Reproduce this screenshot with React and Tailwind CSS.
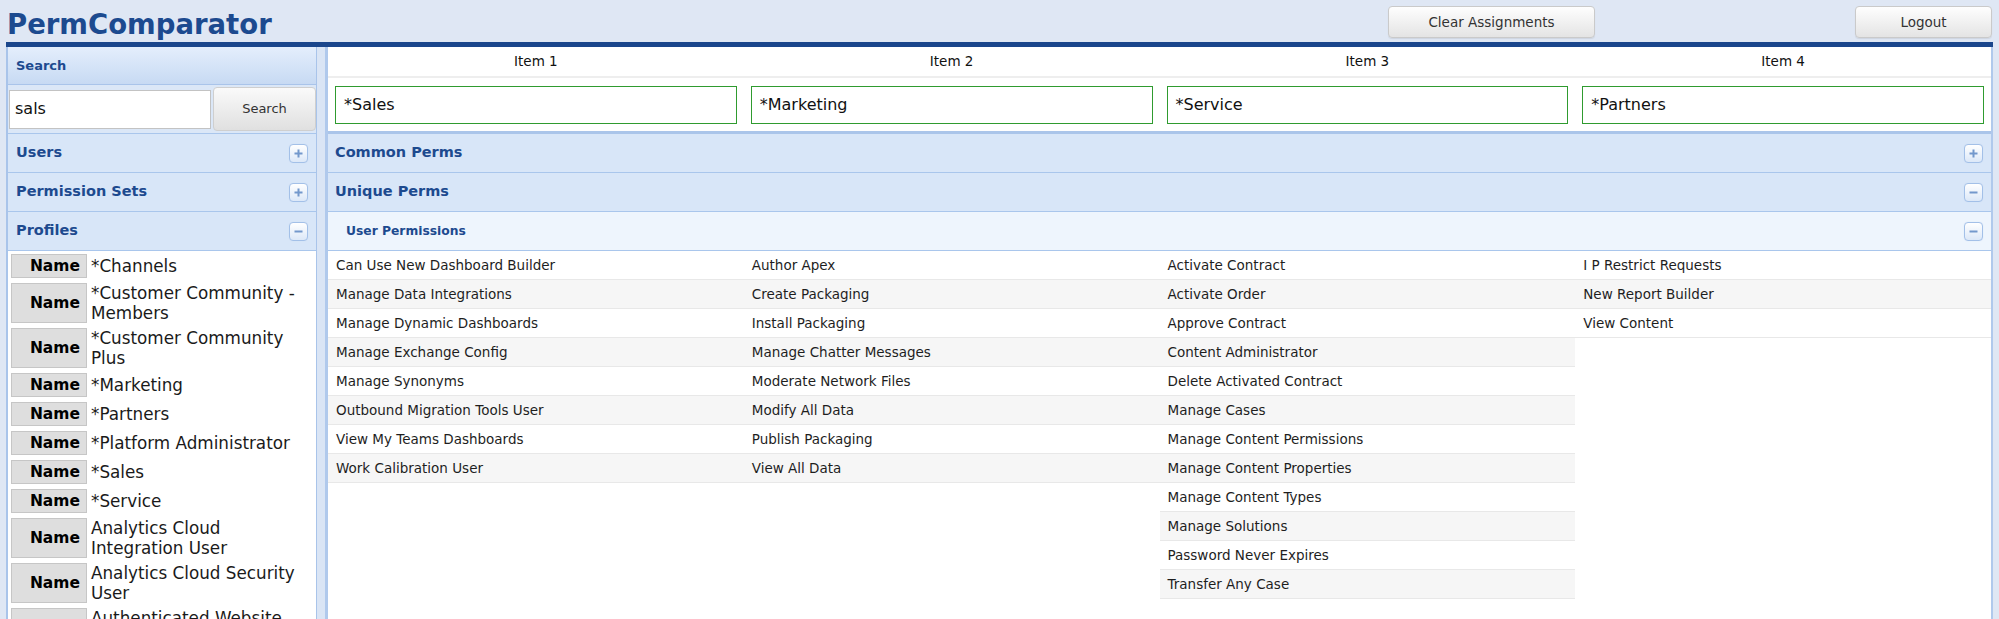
import React from "react";

const FONT = { fontFamily: '"DejaVu Sans", Verdana, sans-serif' };

const profiles = [
  "*Channels",
  "*Customer Community - Members",
  "*Customer Community Plus",
  "*Marketing",
  "*Partners",
  "*Platform Administrator",
  "*Sales",
  "*Service",
  "Analytics Cloud Integration User",
  "Analytics Cloud Security User",
  "Authenticated Website User",
];

const columns = [
  [
    "Can Use New Dashboard Builder",
    "Manage Data Integrations",
    "Manage Dynamic Dashboards",
    "Manage Exchange Config",
    "Manage Synonyms",
    "Outbound Migration Tools User",
    "View My Teams Dashboards",
    "Work Calibration User",
  ],
  [
    "Author Apex",
    "Create Packaging",
    "Install Packaging",
    "Manage Chatter Messages",
    "Moderate Network Files",
    "Modify All Data",
    "Publish Packaging",
    "View All Data",
  ],
  [
    "Activate Contract",
    "Activate Order",
    "Approve Contract",
    "Content Administrator",
    "Delete Activated Contract",
    "Manage Cases",
    "Manage Content Permissions",
    "Manage Content Properties",
    "Manage Content Types",
    "Manage Solutions",
    "Password Never Expires",
    "Transfer Any Case",
  ],
  ["I P Restrict Requests", "New Report Builder", "View Content"],
];

const items = [
  ["Item 1", "*Sales"],
  ["Item 2", "*Marketing"],
  ["Item 3", "*Service"],
  ["Item 4", "*Partners"],
];

function Toggle({ plus }) {
  return (
    <div className="w-[19px] h-[19px] shrink-0 rounded-[4px] border border-[#a3c0e8] bg-gradient-to-b from-[#ffffff] to-[#dce8f8] flex items-center justify-center shadow-[0_0_1px_#c9daf2]">
      <svg width="11" height="11" viewBox="0 0 11 11">
        <rect x="1.5" y="4.5" width="8" height="2" fill="#7398cc" />
        {plus && <rect x="4.5" y="1.5" width="2" height="8" fill="#7398cc" />}
      </svg>
    </div>
  );
}

function SideSection({ title, plus }) {
  return (
    <div className="h-[39px] shrink-0 flex items-center justify-between pl-[8px] pr-[8px] bg-[#d8e6f8] border-b border-[#a9c6ec]">
      <span className="text-[14.5px] font-bold text-[#1d4a8f]">{title}</span>
      <Toggle plus={plus} />
    </div>
  );
}

function MainSection({ title, plus, light }) {
  return (
    <div
      className={
        "h-[39px] shrink-0 flex items-center justify-between pr-[8px] border-b border-[#a9c6ec] " +
        (light ? "bg-[#eef5fd] pl-[18px]" : "bg-[#d8e6f8] pl-[7px]")
      }
    >
      <span
        className={
          "font-bold text-[#1d4a8f] " + (light ? "text-[12.3px]" : "text-[14.5px]")
        }
      >
        {title}
      </span>
      <Toggle plus={plus} />
    </div>
  );
}

function Btn({ children, className }) {
  return (
    <div
      className={
        "h-[32px] flex items-center justify-center rounded-[4px] border border-[#cacaca] bg-gradient-to-b from-[#fefefe] to-[#e4e4e4] text-[13.5px] text-[#333] shadow-[0_1px_1px_rgba(0,0,0,0.08)] " +
        className
      }
    >
      {children}
    </div>
  );
}

export default function App() {
  return (
    <div
      className="w-[1999px] h-[619px] overflow-hidden bg-[#dfe7f4] text-[#222]"
      style={FONT}
    >
      {/* Header */}
      <div className="h-[42px] flex items-start">
        <div className="pl-[7px] pt-[7px] leading-[34px] text-[27.5px] font-bold text-[#1c4a8f]">
          PermComparator
        </div>
        <div className="ml-auto flex items-start pt-[6px] pr-[7px]">
          <Btn className="w-[207px] mr-[260px]">Clear Assignments</Btn>
          <Btn className="w-[137px]">Logout</Btn>
        </div>
      </div>

      {/* Content */}
      <div className="mx-[6px] border-t-[5px] border-[#1a468c] flex h-[600px]">
        {/* Sidebar */}
        <div className="w-[311px] shrink-0 flex flex-col overflow-hidden border-l-2 border-r border-[#a9c4ea] bg-white">
          <div className="h-[38px] shrink-0 flex items-center pl-[8px] bg-gradient-to-b from-[#e4eefc] to-[#c7daf3] border-b border-[#a9c4ea]">
            <span className="text-[13px] font-bold text-[#1d4a8f]">Search</span>
          </div>
          <div className="h-[49px] shrink-0 flex items-center gap-[2px] pl-[1px] bg-[#dbe7f7] border-b border-[#a9c6ec]">
            <div className="w-[202px] h-[39px] bg-white border border-[#c3c3c3] flex items-center pl-[5px] text-[16px] text-[#111]">
              sals
            </div>
            <div className="w-[103px] h-[44px] rounded-[4px] border border-[#cfcfcf] bg-gradient-to-b from-[#fafafa] to-[#e0e0e0] flex items-center justify-center text-[13px] text-[#333]">
              Search
            </div>
          </div>
          <SideSection title="Users" plus />
          <SideSection title="Permission Sets" plus />
          <SideSection title="Profiles" />
          <div className="flex flex-col gap-[5px] pt-[3px] pl-[3px]">
            {profiles.map((p) => (
              <div key={p} className="flex shrink-0 items-stretch gap-[4px]">
                <div className="w-[76px] shrink-0 min-h-[24px] flex items-center justify-end pr-[6px] bg-[#dedede] border border-[#c6c6c6] text-[15.5px] leading-[20px] font-bold text-black">
                  Name
                </div>
                <div className="w-[222px] flex items-center leading-[20px] text-[16.8px] text-[#1a1a1a]">
                  {p}
                </div>
              </div>
            ))}
          </div>
        </div>

        {/* Gap */}
        <div className="w-[8px] shrink-0 bg-[#dae5f5]" />

        {/* Main */}
        <div className="flex-1 flex flex-col border-l-[3px] border-r-2 border-[#b0c9ec] bg-white min-w-0">
          <div className="grid grid-cols-4 h-[31px] shrink-0 items-center border-b-2 border-[#eeeeee]">
            {items.map(([label]) => (
              <div key={label} className="text-center text-[13.5px] text-[#111]">
                {label}
              </div>
            ))}
          </div>
          <div className="grid grid-cols-4 h-[56px] shrink-0 items-center border-b-[3px] border-[#aac5ea]">
            {items.map(([label, val]) => (
              <div key={label} className="px-[7px]">
                <div className="h-[38px] border-[1.5px] border-[#2f9b2f] flex items-center pl-[8px] text-[16px] text-[#111]">
                  {val}
                </div>
              </div>
            ))}
          </div>
          <MainSection title="Common Perms" plus />
          <MainSection title="Unique Perms" />
          <MainSection title="User Permissions" light />
          <div className="grid grid-cols-4 items-start">
            {columns.map((col, ci) => (
              <div key={ci} className="flex flex-col">
                {col.map((t, i) => (
                  <div
                    key={t}
                    className={
                      "h-[29px] flex items-center pl-[8px] text-[13.5px] text-[#1e1e1e] border-b border-[#e8e8e8] " +
                      (i % 2 === 1 ? "bg-[#f6f6f6]" : "bg-white")
                    }
                  >
                    {t}
                  </div>
                ))}
              </div>
            ))}
          </div>
        </div>
      </div>
    </div>
  );
}
